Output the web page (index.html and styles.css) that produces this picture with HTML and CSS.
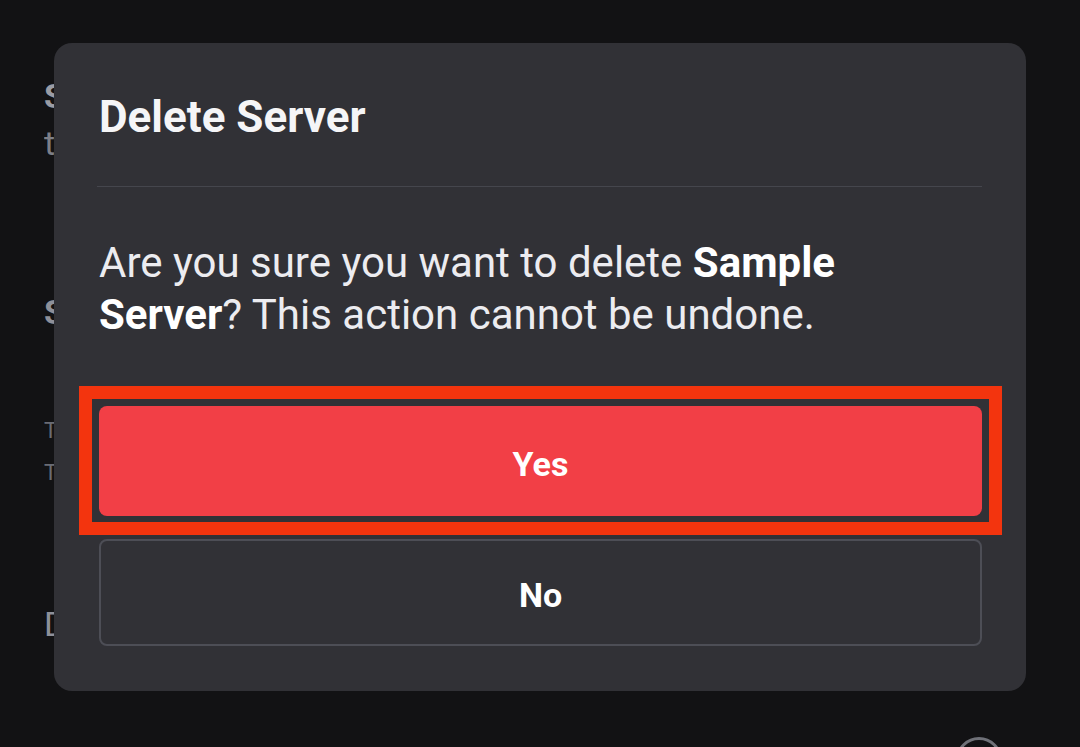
FILE: index.html
```html
<!DOCTYPE html>
<html lang="en">
<head>
<meta charset="utf-8">
<title>Delete Server</title>
<link rel="stylesheet" href="styles.css">
</head>
<body>
  <div class="backdrop">
    <div class="bg-col">
      <div class="bg-title">Server Overview</div>
      <div class="bg-sub">the settings of your server</div>
      <div class="bg-section">Server Name</div>
      <div class="bg-small">Text channels</div>
      <div class="bg-small second">Text channels</div>
      <div class="bg-delete">Delete Server</div>
    </div>
    <div class="bg-bottom"><span class="bg-circle"></span></div>
  </div>

  <div class="modal">
    <h1 class="modal-title">Delete Server</h1>
    <div class="separator"></div>
    <p class="modal-text">Are you sure you want to delete <strong>Sample Server</strong>? This action cannot be undone.</p>
    <div class="yes-wrap">
      <button class="btn btn-yes">Yes</button>
      <span class="highlight"></span>
    </div>
    <button class="btn btn-no">No</button>
  </div>
</body>
</html>
```

FILE: styles.css
```css
html, body {
  margin: 0;
  padding: 0;
  height: 100%;
}

body {
  background: #121214;
  font-family: Roboto, "Noto Sans", "Liberation Sans", sans-serif;
  overflow: hidden;
  position: relative;
}

.backdrop {
  height: 747px;
  display: flex;
  flex-direction: column;
  padding-left: 44px;
  box-sizing: border-box;
  color: #8e9099;
}

.bg-col {
  width: 11px;
  overflow: hidden;
  white-space: nowrap;
  display: flex;
  flex-direction: column;
}

.bg-title {
  margin-top: 74px;
  font-size: 34px;
  font-weight: 700;
  line-height: 44px;
  color: #9a9ca4;
}

.bg-sub {
  font-size: 34px;
  line-height: 50px;
  color: #7d7f87;
}

.bg-section {
  margin-top: 122px;
  font-size: 34px;
  font-weight: 700;
  line-height: 44px;
  color: #8e9099;
}

.bg-small {
  margin-top: 84px;
  font-size: 22px;
  line-height: 26px;
  color: #6a6c74;
}

.bg-small.second {
  margin-top: 16px;
}

.bg-delete {
  margin-top: 118px;
  font-size: 34px;
  line-height: 40px;
  color: #8e9099;
}

.bg-bottom {
  margin-top: auto;
  display: flex;
  justify-content: flex-end;
  padding-right: 78px;
  height: 10px;
}

.bg-circle {
  width: 40px;
  height: 40px;
  border: 3px solid #6f7178;
  border-radius: 50%;
  flex-shrink: 0;
}

.modal {
  position: absolute;
  left: 54px;
  top: 43px;
  width: 972px;
  box-sizing: border-box;
  padding: 48px 44px 45px 45px;
  background: #313136;
  border-radius: 18px;
  display: flex;
  flex-direction: column;
}

.modal-title {
  margin: 0;
  font-size: 44px;
  line-height: 52px;
  font-weight: 700;
  color: #f5f5f7;
}

.separator {
  margin-top: 43px;
  height: 1px;
  background: #45464d;
  margin-left: -2px;
}

.modal-text {
  margin: 50px 0 0 0;
  font-size: 42px;
  line-height: 52px;
  color: #ececf0;
  font-weight: 400;
}

.modal-text strong {
  font-weight: 700;
  color: #ffffff;
}

.yes-wrap {
  margin-top: 65px;
  position: relative;
  display: flex;
  flex-direction: column;
}

.btn {
  font-family: Roboto, "Noto Sans", "Liberation Sans", sans-serif;
  font-size: 34px;
  font-weight: 700;
  color: #ffffff;
  border-radius: 8px;
  cursor: pointer;
  margin: 0;
  padding: 5px 0 0 0;
}

.btn-yes {
  height: 110px;
  background: #f23f46;
  border: none;
}

.btn-no {
  margin-top: 23px;
  height: 107px;
  background: transparent;
  border: 2px solid #4d4e56;
}

.highlight {
  position: absolute;
  left: -20px;
  top: -20px;
  right: -20px;
  bottom: -19px;
  border: 13px solid #f3340e;
  pointer-events: none;
}
```
